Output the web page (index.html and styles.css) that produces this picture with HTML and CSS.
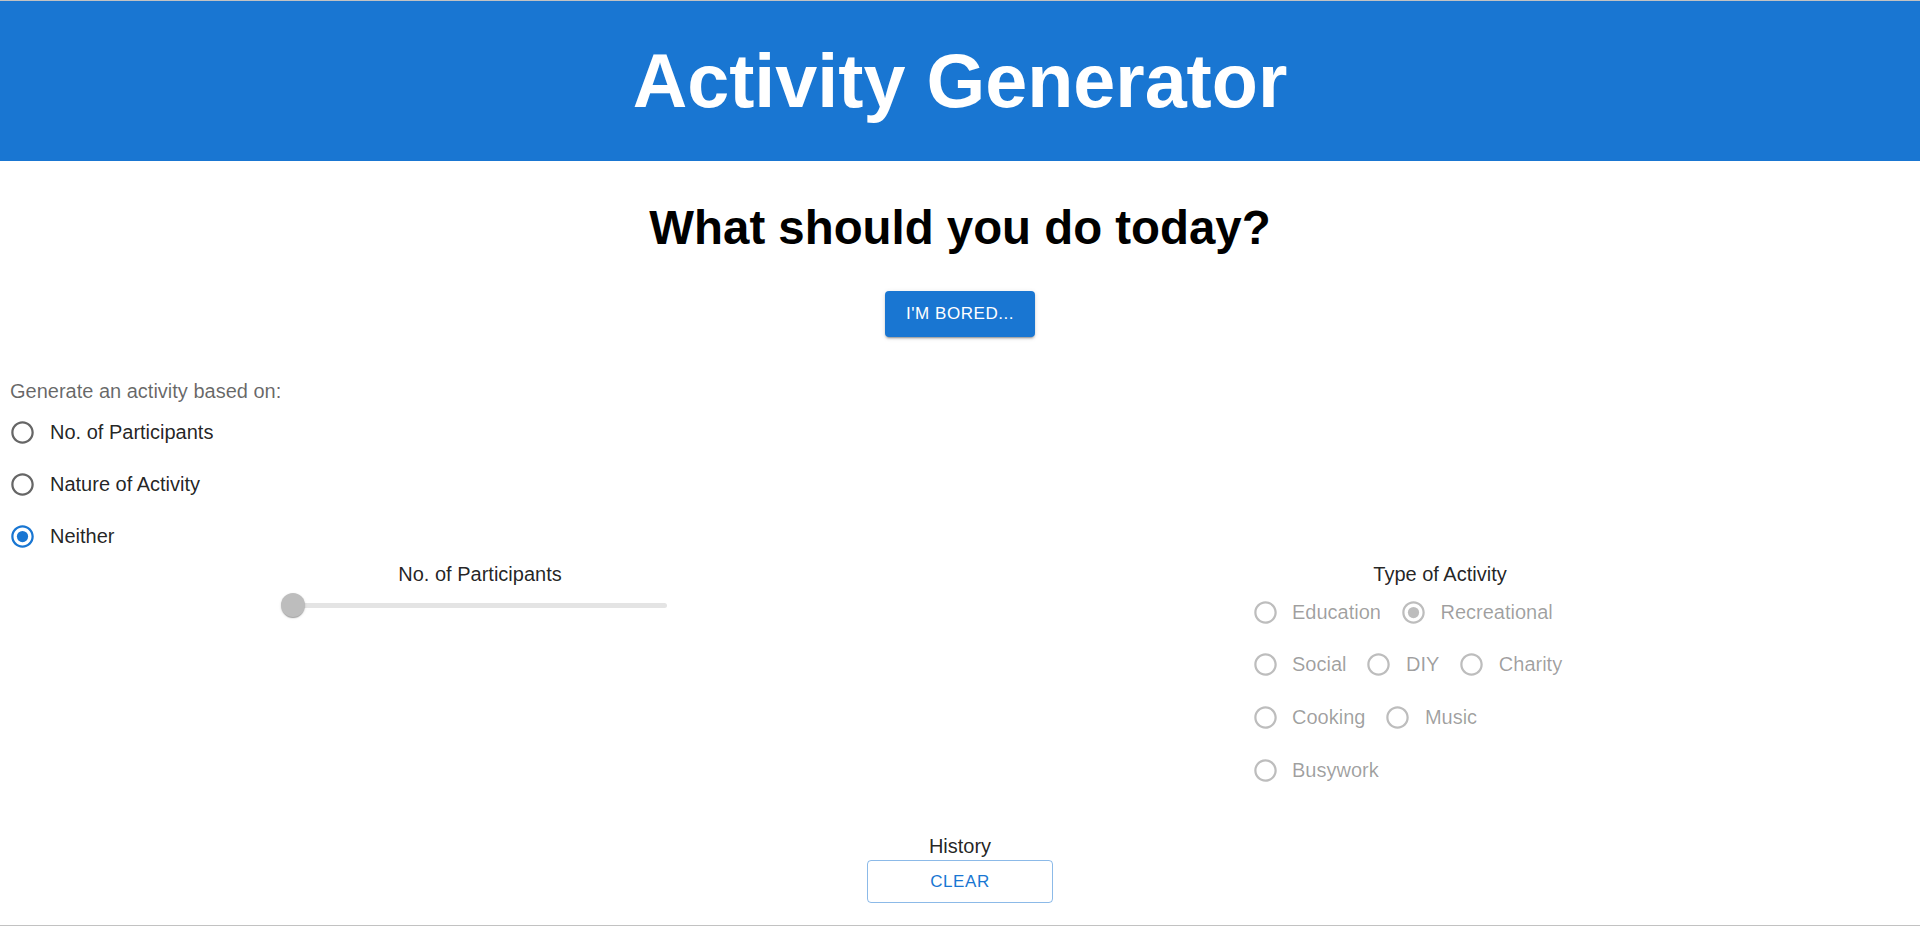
FILE: index.html
```html
<!DOCTYPE html>
<html lang="en">
<head>
<meta charset="utf-8">
<title>Activity Generator</title>
<link rel="stylesheet" href="styles.css">
</head>
<body>
<div class="app">
  <header class="topbar">
    <h1 class="app-title">Activity Generator</h1>
  </header>
  <main class="main">
    <h2 class="question">What should you do today?</h2>
    <div class="center-row">
      <button class="btn-contained" type="button">I'M BORED...</button>
    </div>

    <section class="basis">
      <div class="basis-label">Generate an activity based on:</div>
      <div class="radio-list">
        <label class="radio-row">
          <svg class="radio-icon icon-dark" viewBox="0 0 24 24"><path d="M12 2C6.48 2 2 6.48 2 12s4.48 10 10 10 10-4.48 10-10S17.52 2 12 2zm0 18c-4.42 0-8-3.58-8-8s3.58-8 8-8 8 3.58 8 8-3.58 8-8 8z"/></svg>
          <span class="radio-text">No. of Participants</span>
        </label>
        <label class="radio-row">
          <svg class="radio-icon icon-dark" viewBox="0 0 24 24"><path d="M12 2C6.48 2 2 6.48 2 12s4.48 10 10 10 10-4.48 10-10S17.52 2 12 2zm0 18c-4.42 0-8-3.58-8-8s3.58-8 8-8 8 3.58 8 8-3.58 8-8 8z"/></svg>
          <span class="radio-text">Nature of Activity</span>
        </label>
        <label class="radio-row">
          <svg class="radio-icon icon-blue" viewBox="0 0 24 24"><path d="M12 2C6.48 2 2 6.48 2 12s4.48 10 10 10 10-4.48 10-10S17.52 2 12 2zm0 18c-4.42 0-8-3.58-8-8s3.58-8 8-8 8 3.58 8 8-3.58 8-8 8z"/><circle cx="12" cy="12" r="5"/></svg>
          <span class="radio-text">Neither</span>
        </label>
      </div>
    </section>

    <section class="columns">
      <div class="col">
        <div class="col-label">No. of Participants</div>
        <div class="slider">
          <div class="slider-rail"></div>
          <div class="slider-thumb"></div>
        </div>
      </div>
      <div class="col">
        <div class="col-label">Type of Activity</div>
        <div class="type-wrap">
          <div class="type-group">
            <label class="type-item"><svg class="radio-icon icon-off" viewBox="0 0 24 24"><path d="M12 2C6.48 2 2 6.48 2 12s4.48 10 10 10 10-4.48 10-10S17.52 2 12 2zm0 18c-4.42 0-8-3.58-8-8s3.58-8 8-8 8 3.58 8 8-3.58 8-8 8z"/></svg><span class="type-text">Education</span></label>
            <label class="type-item"><svg class="radio-icon icon-off" viewBox="0 0 24 24"><path d="M12 2C6.48 2 2 6.48 2 12s4.48 10 10 10 10-4.48 10-10S17.52 2 12 2zm0 18c-4.42 0-8-3.58-8-8s3.58-8 8-8 8 3.58 8 8-3.58 8-8 8z"/><circle cx="12" cy="12" r="5"/></svg><span class="type-text">Recreational</span></label>
            <label class="type-item"><svg class="radio-icon icon-off" viewBox="0 0 24 24"><path d="M12 2C6.48 2 2 6.48 2 12s4.48 10 10 10 10-4.48 10-10S17.52 2 12 2zm0 18c-4.42 0-8-3.58-8-8s3.58-8 8-8 8 3.58 8 8-3.58 8-8 8z"/></svg><span class="type-text">Social</span></label>
            <label class="type-item"><svg class="radio-icon icon-off" viewBox="0 0 24 24"><path d="M12 2C6.48 2 2 6.48 2 12s4.48 10 10 10 10-4.48 10-10S17.52 2 12 2zm0 18c-4.42 0-8-3.58-8-8s3.58-8 8-8 8 3.58 8 8-3.58 8-8 8z"/></svg><span class="type-text">DIY</span></label>
            <label class="type-item"><svg class="radio-icon icon-off" viewBox="0 0 24 24"><path d="M12 2C6.48 2 2 6.48 2 12s4.48 10 10 10 10-4.48 10-10S17.52 2 12 2zm0 18c-4.42 0-8-3.58-8-8s3.58-8 8-8 8 3.58 8 8-3.58 8-8 8z"/></svg><span class="type-text">Charity</span></label>
            <label class="type-item"><svg class="radio-icon icon-off" viewBox="0 0 24 24"><path d="M12 2C6.48 2 2 6.48 2 12s4.48 10 10 10 10-4.48 10-10S17.52 2 12 2zm0 18c-4.42 0-8-3.58-8-8s3.58-8 8-8 8 3.58 8 8-3.58 8-8 8z"/></svg><span class="type-text">Cooking</span></label>
            <label class="type-item"><svg class="radio-icon icon-off" viewBox="0 0 24 24"><path d="M12 2C6.48 2 2 6.48 2 12s4.48 10 10 10 10-4.48 10-10S17.52 2 12 2zm0 18c-4.42 0-8-3.58-8-8s3.58-8 8-8 8 3.58 8 8-3.58 8-8 8z"/></svg><span class="type-text">Music</span></label>
            <label class="type-item"><svg class="radio-icon icon-off" viewBox="0 0 24 24"><path d="M12 2C6.48 2 2 6.48 2 12s4.48 10 10 10 10-4.48 10-10S17.52 2 12 2zm0 18c-4.42 0-8-3.58-8-8s3.58-8 8-8 8 3.58 8 8-3.58 8-8 8z"/></svg><span class="type-text">Busywork</span></label>
          </div>
        </div>
      </div>
    </section>

    <section class="history">
      <div class="history-label">History</div>
      <button class="btn-outlined" type="button">CLEAR</button>
    </section>
  </main>
</div>
</body>
</html>
```

FILE: styles.css
```css
* { box-sizing: border-box; }
html, body { margin: 0; padding: 0; }
body {
  font-family: "Liberation Sans", Arial, sans-serif;
  color: rgba(0, 0, 0, 0.87);
  background: #fff;
}
.app {
  height: 926px;
  border-top: 1px solid #c2c2c2;
  border-bottom: 1px solid #c2c2c2;
  display: flex;
  flex-direction: column;
  overflow: hidden;
}
.topbar {
  height: 160px;
  flex: none;
  background: #1976d2;
  display: flex;
  align-items: center;
  justify-content: center;
}
.app-title {
  margin: 0;
  color: #fff;
  font-size: 75.5px;
  line-height: 84px;
  font-weight: 700;
}
.main {
  flex: 1;
  display: flex;
  flex-direction: column;
}
.question {
  margin: 38px 0 0;
  text-align: center;
  font-size: 47.4px;
  line-height: 57px;
  font-weight: 700;
  color: #000;
}
.center-row {
  display: flex;
  justify-content: center;
  margin-top: 35px;
}
.btn-contained {
  width: 150px;
  height: 46px;
  border: 0;
  border-radius: 4px;
  background: #1976d2;
  color: #fff;
  font-family: "Liberation Sans", Arial, sans-serif;
  font-size: 17px;
  letter-spacing: 0.55px;
  font-weight: 400;
  box-shadow: 0 3px 1px -2px rgba(0,0,0,0.2), 0 2px 2px 0 rgba(0,0,0,0.14), 0 1px 5px 0 rgba(0,0,0,0.12);
  padding: 0;
}
.basis {
  margin-top: 39px;
}
.basis-label {
  padding-left: 10px;
  font-size: 20px;
  line-height: 30px;
  color: rgba(0, 0, 0, 0.6);
}
.radio-list {
  display: flex;
  flex-direction: column;
  padding-left: 9px;
}
.radio-row {
  height: 52px;
  display: flex;
  align-items: center;
  gap: 14px;
}
.radio-icon {
  width: 27px;
  height: 27px;
  flex: none;
}
.icon-dark { fill: rgba(0, 0, 0, 0.6); }
.icon-blue { fill: #1976d2; }
.icon-off { fill: rgba(0, 0, 0, 0.26); }
.radio-text {
  font-size: 20px;
  color: rgba(0, 0, 0, 0.87);
}
.columns {
  display: grid;
  grid-template-columns: 1fr 1fr;
}
.col {
  display: flex;
  flex-direction: column;
  align-items: center;
}
.col-label {
  font-size: 20px;
  line-height: 24px;
  color: rgba(0, 0, 0, 0.87);
}
.slider {
  width: 374.5px;
  height: 38px;
  display: flex;
  align-items: center;
  position: relative;
}
.slider-rail {
  width: 100%;
  height: 5px;
  border-radius: 3px;
  background: #e4e4e4;
}
.slider-thumb {
  position: absolute;
  left: -12px;
  top: 7px;
  width: 24px;
  height: 24px;
  border-radius: 50%;
  background: #bdbdbd;
  box-shadow: 0 2px 1px -1px rgba(0,0,0,0.2), 0 1px 1px 0 rgba(0,0,0,0.14), 0 1px 3px 0 rgba(0,0,0,0.12);
}
.type-wrap {
  width: 377px;
  padding-right: 30px;
}
.type-group {
  display: flex;
  flex-wrap: wrap;
  column-gap: 19px;
}
.type-item {
  height: 52.67px;
  display: flex;
  align-items: center;
  gap: 13.5px;
}
.type-text {
  font-size: 20px;
  color: rgba(0, 0, 0, 0.38);
}
.history {
  margin-top: 37.6px;
  display: flex;
  flex-direction: column;
  align-items: center;
}
.history-label {
  font-size: 20px;
  line-height: 24px;
  color: rgba(0, 0, 0, 0.87);
}
.btn-outlined {
  margin-top: 2px;
  width: 186px;
  height: 43px;
  border: 1px solid rgba(25, 118, 210, 0.5);
  border-radius: 4px;
  background: transparent;
  color: #1976d2;
  font-family: "Liberation Sans", Arial, sans-serif;
  font-size: 17px;
  letter-spacing: 0.55px;
  padding: 0;
}
```
